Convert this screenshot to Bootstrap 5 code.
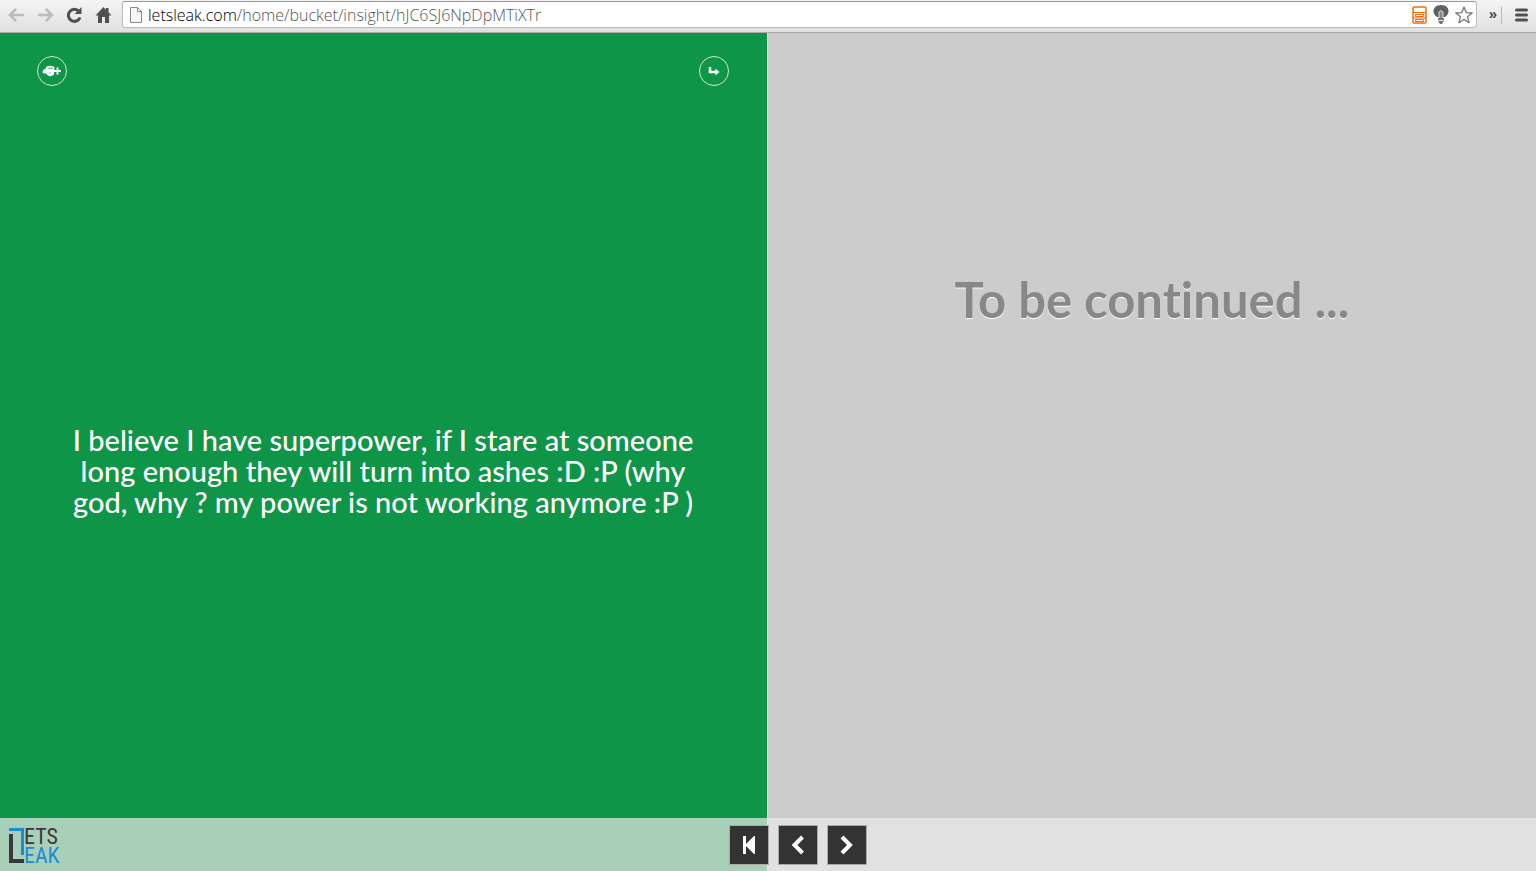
<!DOCTYPE html>
<html lang="en">
<head>
<meta charset="utf-8">
<meta name="viewport" content="width=device-width, initial-scale=1">
<title>LetsLeak</title>
<link href="https://cdn.jsdelivr.net/npm/bootstrap@5.3.0/dist/css/bootstrap.min.css" rel="stylesheet">
<style>
  body { font-family: Lato, sans-serif; font-variant-ligatures: none; background: #ccc; }
  .toolbar { height: 33px; background: linear-gradient(#f4f4f4, #e0e0e0); border-bottom: 1px solid #aaa; padding: 1px 8px 4px 8px; }
  .toolbar button, .toolbar a { display: flex; padding: 0; border: 0; background: none; }
  .toolbar svg { display: block; }
  .nav-tools { gap: 12px; width: 114px; }
  .address { height: 27px; border: 1px solid #bbb; border-top-color: #999; border-radius: 3px; background: #fff; padding: 0 3px 0 7px; gap: 6px; }
  .url-box { font: 300 16px/24px "Open Sans", "Noto Sans", sans-serif; color: #555; }
  .url-box b { font-weight: 300; color: #000; }
  .url-box:focus { outline: 0; }
  .toolbar .more { font: 700 15px/20px "Liberation Sans", sans-serif; color: #444; padding: 0 4px 2px 12px; }
  .rule { width: 1px; height: 18px; margin-right: 13px; background: #bbb; }
  .leak { background: #0f9547; border-right: 1px solid #d0dcd4; padding: 23px 38px 0 37px; }
  .round-btn { width: 30px; height: 30px; border: 1px solid #cfe5d7; border-radius: 50%; background: none; padding: 0; display: flex; align-items: center; justify-content: center; }
  .message { font-size: 29px; line-height: 31px; font-weight: 500; max-width: 640px; margin: 0 auto; padding-bottom: 16px; }
  .next-leak { padding-top: 236px; }
  .next-leak h1 { font-size: 49px; line-height: 60px; font-weight: 700; color: #888; text-shadow: 0 1px 1px #fff; }
  .bottom-bar { height: 53px; background: rgba(234, 234, 234, .7); }
  .brand { left: 8px; top: 4px; }
  .brand text { font: 22px "Roboto Condensed", "Liberation Sans Narrow", "Liberation Sans", sans-serif; }
  .pager { gap: 9px; padding: 7px 0 0 60px; }
  .pager button { width: 40px; height: 40px; padding: 0; border: 1px solid #aaa; background: #333; display: flex; align-items: center; justify-content: center; }
</style>
</head>
<body class="vh-100 d-flex flex-column overflow-hidden">
<header class="toolbar d-flex align-items-center flex-shrink-0">
  <nav class="nav-tools d-flex align-items-center" aria-label="Browser">
    <button type="button" aria-label="Back"><svg width="17" height="16" fill="none" stroke="#bbb" stroke-width="2.5" stroke-linecap="round"><path d="M2 8H15M7.500 2.500L2 8L7.500 13.500"/></svg></button>
    <button type="button" aria-label="Forward"><svg width="17" height="16" fill="none" stroke="#bbb" stroke-width="2.500" stroke-linecap="round"><path d="M2 8H15M9.500 2.500L15 8L9.500 13.500"/></svg></button>
    <button type="button" aria-label="Reload"><svg width="17" height="16"><path d="M13 4.500A6 6 0 1 0 14 10.500" fill="none" stroke="#505050" stroke-width="3"/><path d="M15.500 0V7H8.500Z" fill="#505050"/></svg></button>
    <a href="#" aria-label="Home"><svg width="17" height="16" fill="#505050"><path d="M8.500 0L11 2.700V1H13.500V5.200L16.500 8.500H14V16H10V10H7V16H3V8.500H.5Z"/></svg></a>
  </nav>
  <div class="address flex-grow-1 d-flex align-items-center">
    <svg width="12" height="16" fill="#f6f6f6" stroke="#888"><path d="M.5.5H7.500L11.500 4.500V15.500H.5ZM7.500.5V4.500H11.500"/></svg>
    <div class="url-box flex-grow-1" role="textbox" contenteditable="true" spellcheck="false" aria-label="Address"><b>letsleak.com</b>/home/bucket/insight/hJC6SJ6NpDpMTiXTr</div>
    <button type="button" aria-label="Reader"><svg width="15" height="18" fill="none" stroke="#f76b0a"><rect x="1" y="1" width="13" height="16" rx="1" stroke-width="1.500"/><path d="M1 6.500H14M3.500 8.500H11.500V10.500H3.500ZM3.500 13.500H11.500V15.500H3.500ZM1 12H14"/></svg></button>
    <button type="button" aria-label="Lights"><svg width="16" height="19"><path d="M4 12C-2 8 0 0 8 0S18 8 12 12Z" fill="#606060"/><path d="M6 13V7Q8 4 10 7V13" fill="#888" stroke="#ddd"/><path d="M5 13H11V16L9 19H7L5 16Z" fill="#777"/><path d="M5 15.500H11" stroke="#ddd"/></svg></button>
    <button type="button" aria-label="Bookmark"><svg width="18" height="18" fill="#fff" stroke="#777" stroke-width="1.300" stroke-linejoin="round"><path d="M9 1L11.200 6.600L17.200 7L12.600 10.800L14.100 16.700L9 13.400L3.900 16.700L5.400 10.800L.8 7L6.800 6.600Z"/></svg></button>
  </div>
  <button type="button" class="more" aria-label="More extensions">»</button>
  <span class="rule"></span>
  <button type="button" aria-label="Menu"><svg width="13" height="14" stroke="#505050" stroke-width="3" stroke-linecap="round"><path d="M1.500 2H11.500M1.500 7H11.500M1.500 12H11.500"/></svg></button>
</header>

<main class="row g-0 flex-grow-1 position-relative">
  <section class="col-6 leak d-flex flex-column text-white">
    <div class="d-flex justify-content-between">
      <button type="button" class="round-btn" aria-label="Add to bucket"><svg width="20" height="12"><path d="M4 2Q8-.5 12.500 2L12 9.500Q8.500 12.500 5 10L4.500 8.500Q0 9 .5 6.500T4 3.500Z" fill="#fff"/><path d="M6 3Q8.500 4 11 3M7 8.500L8.500 7" fill="none" stroke="#0f9547" stroke-width=".8"/><path d="M12 6H19M15.500 2.500V9.500" stroke="#fff" stroke-width="2"/></svg></button>
      <button type="button" class="round-btn" aria-label="Open"><svg width="12" height="10"><path d="M2 1V6H8" fill="none" stroke="#fff" stroke-width="2.500"/><path d="M7.500 2.500L11.500 6L7.500 9.500Z" fill="#fff"/></svg></button>
    </div>
    <div class="flex-grow-1 d-flex align-items-center">
      <p class="message text-center">I believe I have superpower, if I stare at someone long enough they will turn into ashes :D :P (why god, why ? my power is not working anymore :P )</p>
    </div>
  </section>
  <section class="col-6 next-leak text-center">
    <h1>To be continued ...</h1>
  </section>
  <footer class="bottom-bar position-absolute bottom-0 start-0 w-100">
    <a href="#" class="brand position-absolute" aria-label="Lets Leak home"><svg class="d-block" width="56" height="49"><path d="M1 6H16V33H13V9H1Z" fill="#1d8bd1"/><path d="M1 12H5V37H16V41H1Z" fill="#393939"/><text x="16" y="22" fill="#393939">ETS</text><text x="16" y="41" fill="#1d8bd1">EAK</text></svg></a>
    <nav class="pager d-flex justify-content-center" aria-label="Leaks">
      <button type="button" aria-label="First"><svg width="14" height="18" fill="#fff"><path d="M1 0H4V8L12 0H13V18H12L4 10V18H1Z"/></svg></button>
      <button type="button" aria-label="Previous"><svg width="14" height="20" fill="none" stroke="#fff" stroke-width="4"><path d="M11.500 2L3.500 10L11.500 18"/></svg></button>
      <button type="button" aria-label="Next"><svg width="14" height="20" fill="none" stroke="#fff" stroke-width="4"><path d="M2 2L10 10L2 18"/></svg></button>
    </nav>
  </footer>
</main>
<script src="https://cdn.jsdelivr.net/npm/bootstrap@5.3.0/dist/js/bootstrap.bundle.min.js"></script>
</body>
</html>
